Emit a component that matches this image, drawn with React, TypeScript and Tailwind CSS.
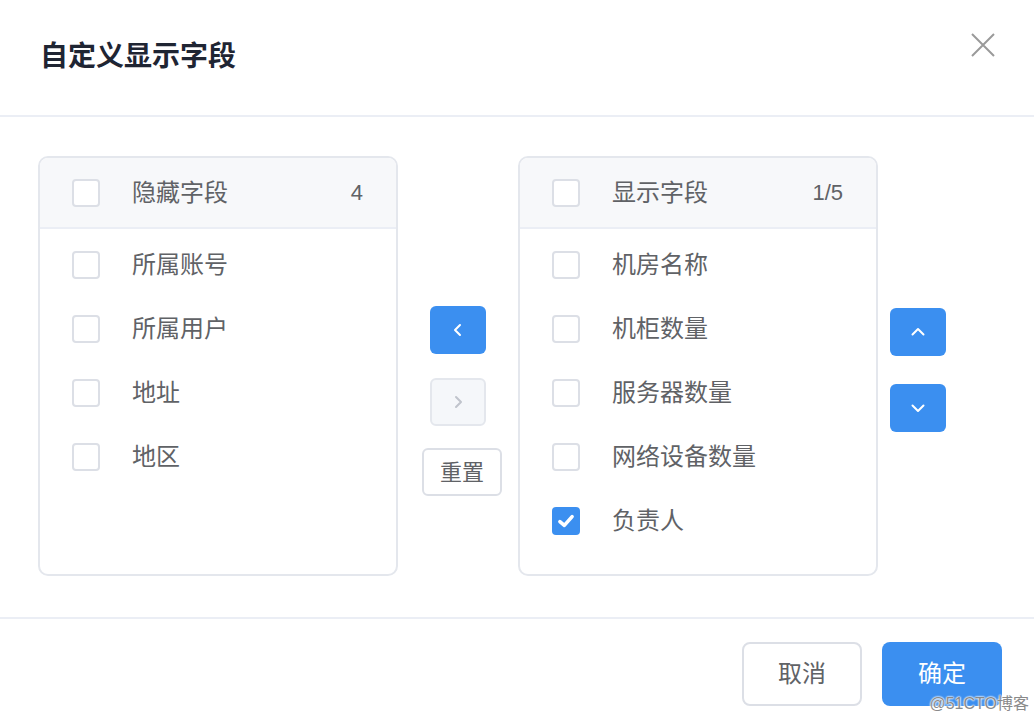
import React from 'react'

const font = { fontFamily: '"Liberation Sans", "Noto Sans CJK SC", sans-serif' }

function Box({ checked = false }: { checked?: boolean }) {
  if (checked) {
    return (
      <span className="w-[28px] h-[28px] rounded-[4px] bg-[#3b8ff0] flex items-center justify-center shrink-0">
        <svg width="20" height="20" viewBox="0 0 18 18" fill="none">
          <path d="M3.5 9.5 L7.5 13 L14.5 5" stroke="white" strokeWidth="3.2" strokeLinecap="round" strokeLinejoin="round" />
        </svg>
      </span>
    )
  }
  return <span className="w-[28px] h-[28px] rounded-[4px] border-2 border-[#dcdfe6] bg-white shrink-0" />
}

function Panel({ title, count, items, checkedIdx }: { title: string; count: string; items: string[]; checkedIdx?: number }) {
  return (
    <div className="w-[360px] h-[420px] border-2 border-[#e4e7ed] rounded-[10px] overflow-hidden flex flex-col">
      <div className="h-[71px] bg-[#f7f8fa] border-b-2 border-[#ebeef5] flex items-center pl-[32px] pr-[33px]">
        <Box />
        <span className="ml-[32px] text-[24px] text-[#606266]">{title}</span>
        <span className="ml-auto text-[22px] text-[#606266]">{count}</span>
      </div>
      <div className="pt-[4px] flex flex-col">
        {items.map((it, i) => (
          <div key={it} className="h-[64px] flex items-center pl-[32px]">
            <Box checked={i === checkedIdx} />
            <span className="ml-[32px] text-[24px] text-[#606266]">{it}</span>
          </div>
        ))}
      </div>
    </div>
  )
}

function Chevron({ dir }: { dir: 'left' | 'right' | 'up' | 'down' }) {
  const d = {
    left: 'M10 3 L5 8 L10 13',
    right: 'M6 3 L11 8 L6 13',
    up: 'M2.5 10.5 L8 5 L13.5 10.5',
    down: 'M2.5 5.5 L8 11 L13.5 5.5',
  }[dir]
  const color = dir === 'right' ? '#c0c4cc' : 'white'
  return (
    <svg width="16" height="16" viewBox="0 0 16 16" fill="none">
      <path d={d} stroke={color} strokeWidth="2" strokeLinecap="round" strokeLinejoin="round" />
    </svg>
  )
}

export default function App() {
  return (
    <div className="w-[1034px] h-[720px] bg-white relative overflow-hidden" style={font}>
      <div className="h-[117px] border-b-2 border-[#ebeef5] flex items-start pl-[40px] pr-[39px]">
        <h1 className="mt-[37px] text-[28px] leading-[40px] font-bold text-[#1f2533]">自定义显示字段</h1>
        <button className="ml-auto mt-[33px] w-[24px] h-[24px]">
          <svg width="24" height="24" viewBox="0 0 24 24" fill="none">
            <path d="M1 1 L23 23 M23 1 L1 23" stroke="#9a9a9a" strokeWidth="2" />
          </svg>
        </button>
      </div>

      <div className="h-[502px] border-b-2 border-[#ebeef5] flex items-start pt-[39px] pl-[38px]">
        <Panel title="隐藏字段" count="4" items={['所属账号', '所属用户', '地址', '地区']} />

        <div className="w-[120px] h-[420px] flex flex-col items-center pt-[150px]">
          <button className="w-[56px] h-[48px] rounded-[6px] bg-[#3b8ff0] flex items-center justify-center">
            <Chevron dir="left" />
          </button>
          <button className="mt-[24px] w-[56px] h-[48px] rounded-[6px] bg-[#f5f7fa] border-2 border-[#e4e7ed] flex items-center justify-center">
            <Chevron dir="right" />
          </button>
          <button className="mt-[22px] ml-[8px] w-[80px] h-[48px] rounded-[6px] bg-white border-2 border-[#dcdfe6] text-[22px] text-[#606266] flex items-center justify-center">
            重置
          </button>
        </div>

        <Panel title="显示字段" count="1/5" items={['机房名称', '机柜数量', '服务器数量', '网络设备数量', '负责人']} checkedIdx={4} />

        <div className="ml-[12px] flex flex-col pt-[152px]">
          <button className="w-[56px] h-[48px] rounded-[6px] bg-[#3b8ff0] flex items-center justify-center">
            <Chevron dir="up" />
          </button>
          <button className="mt-[28px] w-[56px] h-[48px] rounded-[6px] bg-[#3b8ff0] flex items-center justify-center">
            <Chevron dir="down" />
          </button>
        </div>
      </div>

      <div className="flex justify-end gap-[20px] pt-[23px] pr-[32px]">
        <button className="w-[120px] h-[64px] rounded-[8px] border-2 border-[#dcdfe6] bg-white text-[24px] text-[#606266]">取消</button>
        <button className="w-[120px] h-[64px] rounded-[8px] bg-[#3b8ff0] text-[24px] text-white">确定</button>
      </div>

      <span
        className="absolute right-[5px] bottom-[7px] text-[16px] leading-[18px] text-[#8a8a8a]"
        style={{ textShadow: '0 0 2px #fff, 0 0 2px #fff, 0 0 2px #fff' }}
      >
        @51CTO博客
      </span>
    </div>
  )
}
